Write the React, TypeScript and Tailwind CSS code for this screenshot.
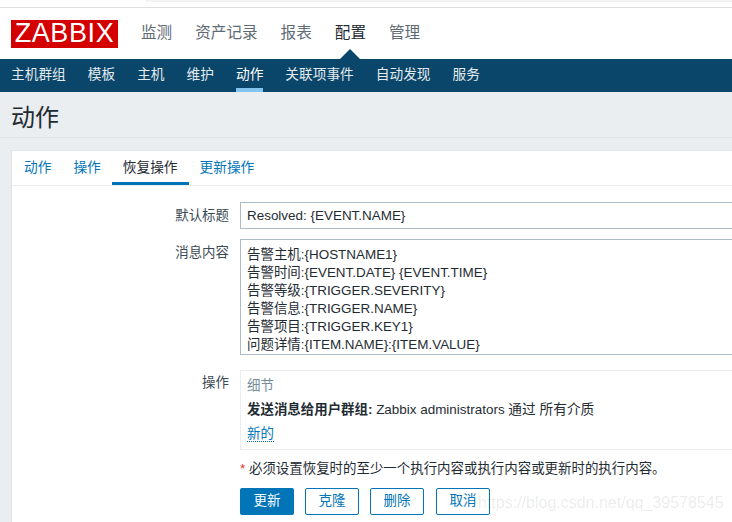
const FONT = "font-['Liberation_Sans','Noto_Sans_CJK_SC',sans-serif]";

const topMenu = ["监测", "资产记录", "报表", "配置", "管理"];
const subMenu = ["主机群组", "模板", "主机", "维护", "动作", "关联项事件", "自动发现", "服务"];
const tabs = ["动作", "操作", "恢复操作", "更新操作"];
const messageLines = [
  "告警主机:{HOSTNAME1}",
  "告警时间:{EVENT.DATE} {EVENT.TIME}",
  "告警等级:{TRIGGER.SEVERITY}",
  "告警信息:{TRIGGER.NAME}",
  "告警项目:{TRIGGER.KEY1}",
  "问题详情:{ITEM.NAME}:{ITEM.VALUE}",
];

function FormRow({ label, labelClass, className, children }: { label: string; labelClass?: string; className?: string; children: React.ReactNode }) {
  return (
    <div className={`flex ${className ?? ""}`}>
      <div className={`w-[217px] shrink-0 text-right leading-[18px] text-[#3c4a54] ${labelClass ?? ""}`}>{label}</div>
      <div className="ml-[11px] min-w-0 flex-1">{children}</div>
    </div>
  );
}

export default function App() {
  return (
    <div className={`relative flex h-[522px] w-[732px] flex-col overflow-hidden bg-[#ebeef0] text-[13.45px] text-[#1f2c33] ${FONT}`}>
      {/* browser strip */}
      <div className="h-[7px] bg-white">
        <div className="ml-[145px] h-[2px] rounded-bl-sm bg-[#f3f3f3]"></div>
      </div>
      <div className="h-px bg-[#dedede]"></div>

      <header className="flex h-[51px] items-center bg-white pl-[11px]">
        <div className="flex h-[28px] w-[107px] items-center justify-center bg-[#d40000] text-[27px] leading-none tracking-[0.6px] text-white">
          ZABBIX
        </div>
        <nav className="ml-[23px] flex h-full items-center gap-[23px] pb-[1px] text-[15.6px]">
          {topMenu.map((item) => (
            <div key={item} className={`relative flex h-full items-center ${item === "配置" ? "text-[#1f2c33]" : "text-[#5f6b74]"}`}>
              {item}
              {item === "配置" && (
                <div className="absolute -bottom-[1px] left-1/2 h-0 w-0 -translate-x-1/2 border-x-[10px] border-b-[10px] border-x-transparent border-b-[#0a466a]"></div>
              )}
            </div>
          ))}
        </nav>
      </header>

      <nav className="flex h-[33px] gap-[22px] bg-[#0a466a] pl-[11px] text-[13.7px] text-[#e4ebef]">
        {subMenu.map((item) => (
          <div
            key={item}
            className={`flex h-full items-center border-b-4 pt-[4px] ${item === "动作" ? "border-[#82c4ee] text-white" : "border-transparent"}`}
          >
            {item}
          </div>
        ))}
      </nav>

      <div className="flex h-[46px] items-center border-b border-[#dfe4e7] pt-[7px] pl-[11px] text-[24px] text-[#1f2c33]">
        动作
      </div>

      <main className="mt-[12px] ml-[11px] w-[740px] flex-1 border-t border-l border-[#dfe4e7] bg-white">
        <div className="flex h-[35px] border-b border-[#ebeef0] pl-px text-[13.7px] text-[#0275b8]">
          {tabs.map((tab) => (
            <div
              key={tab}
              className={`flex h-[34px] items-center border-b-[3px] px-[11px] pt-[3px] ${tab === "恢复操作" ? "border-[#0275b8] text-[#1f2c33]" : "border-transparent"}`}
            >
              {tab}
            </div>
          ))}
        </div>

        <div className="pt-[16px]">
          <FormRow label="默认标题" className="items-center" labelClass="pt-px">
            <div className="flex h-[27px] items-center border border-[#acbbc4] px-[6px] pt-[1px] whitespace-nowrap">
              Resolved: {"{EVENT.NAME}"}
            </div>
          </FormRow>

          <FormRow label="消息内容" className="mt-[10px]" labelClass="pt-[5px]">
            <div className="h-[116px] border border-[#acbbc4] px-[6px] pt-[6px] leading-[18px] whitespace-nowrap">
              {messageLines.map((line) => (
                <div key={line}>{line}</div>
              ))}
            </div>
          </FormRow>

          <FormRow label="操作" className="mt-[15px]" labelClass="pt-[4px]">
            <div className="h-[80px] border border-[#ebeef0] px-[6px] pt-[6px] leading-[18px] whitespace-nowrap">
              <div className="text-[#768d99]">细节</div>
              <div className="mt-[6px]">
                <span className="font-bold">发送消息给用户群组:</span> Zabbix administrators <span className="text-[13.7px]">通过 所有介质</span>
              </div>
              <div className="mt-[6px]">
                <span className="border-b border-dotted border-[#0275b8] text-[#0275b8]">新的</span>
              </div>
            </div>
          </FormRow>

          <div className="mt-[10px] ml-[228px] leading-[18px] whitespace-nowrap">
            <span className="text-[#e33734]">*</span> 必须设置恢复时的至少一个执行内容或执行内容或更新时的执行内容。
          </div>

          <div className="mt-[10px] ml-[228px] flex h-[27px]">
            <button className="h-full w-[54px] rounded-[2px] bg-[#0275b8] text-white">更新</button>
            <button className="ml-[11px] h-full w-[54px] rounded-[2px] border border-[#0275b8] text-[#0275b8]">克隆</button>
            <button className="ml-[11px] h-full w-[54px] rounded-[2px] border border-[#0275b8] text-[#0275b8]">删除</button>
            <button className="ml-[12px] h-full w-[54px] rounded-[2px] border border-[#0275b8] text-[#0275b8]">取消</button>
          </div>
        </div>
      </main>

      {/* blog watermark */}
      <div className="absolute top-[493px] left-[478px] text-[16px] leading-5 whitespace-nowrap text-[#1f2c33]/10">
        https://blog.csdn.net/qq_39578545
      </div>
    </div>
  );
}
